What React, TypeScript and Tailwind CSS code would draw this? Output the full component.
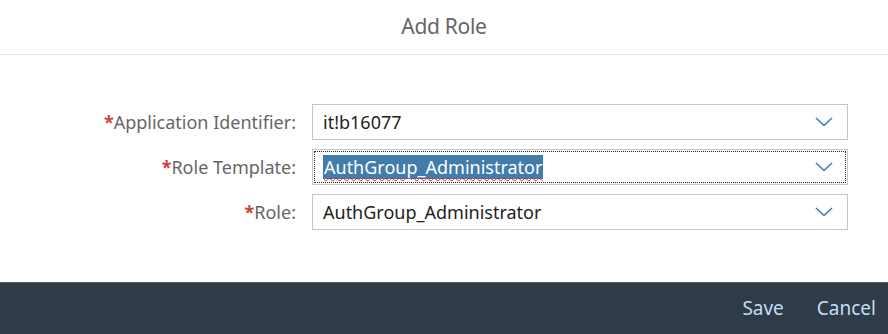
import React from 'react';

const Chevron = () => (
  <svg width="18" height="10" viewBox="0 0 18 10" className="shrink-0">
    <path d="M1 1 L9 8.5 L17 1" fill="none" stroke="#427cac" strokeWidth="1.6" />
  </svg>
);

interface FieldProps {
  label: string;
  value: string;
  focused?: boolean;
}

const Field: React.FC<FieldProps> = ({ label, value, focused }) => (
  <div className="flex items-center">
    <div className="w-[312px] pr-[16px] text-right text-[18px] text-[#666666]">
      <span className="text-[#d04343] font-bold">*</span>
      {label}
    </div>
    <div className="w-[536px] h-[36px] border border-[#c6c6c6] bg-white p-[2px]">
      <div
        className={`flex h-full items-center justify-between pl-[8px] pr-[12px] ${
          focused ? 'outline outline-1 outline-dotted outline-[#222]' : ''
        }`}
      >
        {focused ? (
          <span className="bg-[#427cac] text-white text-[18px] leading-[24px] px-[1px] underline decoration-wavy decoration-[#e02020] decoration-1 underline-offset-[3px]">
            {value}
          </span>
        ) : (
          <span className="text-[18px] text-[#222] leading-[24px]">{value}</span>
        )}
        <Chevron />
      </div>
    </div>
  </div>
);

export default function App() {
  return (
    <div className="w-[888px] h-[334px] flex flex-col bg-white" style={{ fontFamily: '"Noto Sans", "Open Sans", sans-serif' }}>
      <div className="h-[55px] border-b border-[#e5e5e5] flex items-center justify-center">
        <span className="text-[21px] text-[#666666] tracking-[-0.3px]">Add Role</span>
      </div>
      <div className="flex-1 flex flex-col gap-[9px] pt-[49px]">
        <Field label="Application Identifier:" value="it!b16077" />
        <Field label="Role Template:" value="AuthGroup_Administrator" focused />
        <Field label="Role:" value="AuthGroup_Administrator" />
      </div>
      <div className="h-[52px] bg-[#2f3b47] border-t border-[#4a5867] flex items-center justify-end gap-[33px] pr-[12px]">
        <span className="text-[19px] text-[#c3def5]">Save</span>
        <span className="text-[19px] text-[#c3def5]">Cancel</span>
      </div>
    </div>
  );
}
